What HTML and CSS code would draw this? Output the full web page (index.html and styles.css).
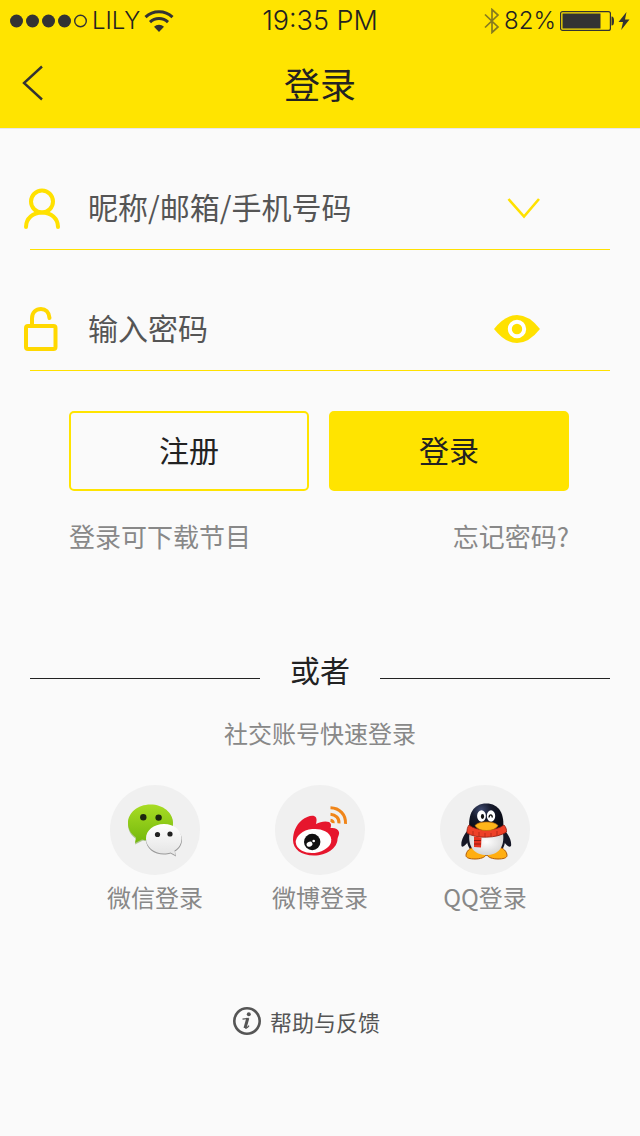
FILE: index.html
```html
<!DOCTYPE html>
<html lang="zh-CN">
<head>
    <meta charset="UTF-8">
    <meta name="viewport" content="width=device-width, initial-scale=1.0">
    <title>登录</title>
    <link rel="stylesheet" href="styles.css">
</head>
<body>
    <header>
        <div class="status-bar">
            <div class="status-left">
                <svg width="78" height="14" viewBox="0 0 78 14" fill="#333">
                    <circle cx="6.5" cy="7" r="6.5"/>
                    <circle cx="22.5" cy="7" r="6.5"/>
                    <circle cx="38.5" cy="7" r="6.5"/>
                    <circle cx="54.5" cy="7" r="6.5"/>
                    <circle cx="70.5" cy="7" r="5.8" fill="none" stroke="#333" stroke-width="1.4"/>
                </svg>
                <span>LILY</span>
                <svg width="30" height="22" viewBox="0 0 30 22" fill="none" stroke="#333" stroke-width="3">
                    <path d="M1.5 7.2a19.5 19.5 0 0 1 27 0"/>
                    <path d="M6 12.2a13 13 0 0 1 18 0"/>
                    <path d="M15 22l-5-5.2a7 7 0 0 1 10 0z" fill="#333" stroke="none"/>
                </svg>
            </div>
            <span class="time">19:35 PM</span>
            <div class="status-right">
                <svg width="16" height="26" viewBox="0 0 16 26" fill="none" stroke="#333" stroke-opacity=".6" stroke-width="1.7">
                    <path d="M1 6.5l13 12.5-6 5.5v-23l6 5.5L1 19.5"/>
                </svg>
                <span>82%</span>
                <svg width="54" height="20" viewBox="0 0 54 20" fill="#333">
                    <rect x=".6" y=".6" width="49.8" height="18.8" rx="2" fill="none" stroke="#333" stroke-width="1.2"/>
                    <rect x="2.5" y="2.5" width="38" height="15"/>
                    <path d="M51.5 5.5c2 0 2.5 1.5 2.5 4.5s-.5 4.5-2.5 4.5z"/>
                </svg>
                <svg width="12" height="20" viewBox="0 0 12 20" fill="#333">
                    <path d="M8.5 1L.5 11H5L3.2 19l8.3-10.5H7z"/>
                </svg>
            </div>
        </div>
        <nav>
            <a href="#" class="back" aria-label="返回">
                <svg width="22" height="36" viewBox="0 0 22 36" fill="none" stroke="#333" stroke-width="2.4">
                    <path d="M20 1.5L2 18l18 16.5"/>
                </svg>
            </a>
            <h1>登录</h1>
        </nav>
    </header>

    <main>
        <form>
            <div class="field">
                <label for="account" aria-label="账号">
                    <svg width="36" height="44" viewBox="0 0 36 44" fill="none" stroke="#ffe100" stroke-width="4" stroke-linecap="round">
                        <circle cx="18" cy="15.5" r="11"/>
                        <path d="M2 41c0-8.500 7-14.500 16-14.500S34 32.500 34 41"/>
                    </svg>
                </label>
                <input type="text" id="account" placeholder="昵称/邮箱/手机号码">
                <button type="button" aria-label="选择账号">
                    <svg width="46" height="30" viewBox="0 0 46 30" fill="none" stroke="#ffe100" stroke-width="2.6">
                        <path d="M14.500 6L30 23.500 45 6"/>
                    </svg>
                </button>
            </div>
            <div class="field">
                <label for="password" aria-label="密码">
                    <svg width="36" height="44" viewBox="0 0 36 44" fill="none" stroke="#ffd800" stroke-width="4" stroke-linecap="round">
                        <rect x="2" y="19" width="29.500" height="23" rx="2"/>
                        <path d="M8 18v-6.500C8 5.500 12 2 17 2c4.500 0 8 3 8.500 9"/>
                    </svg>
                </label>
                <input type="password" id="password" placeholder="输入密码">
                <button type="button" aria-label="显示密码">
                    <svg width="46" height="30" viewBox="0 0 46 30">
                        <path d="M0 15Q11 1 23 1t23 14Q35 29 23 29T0 15z" fill="#ffe100"/>
                        <circle cx="23" cy="15" r="7.200" fill="#ffe100" stroke="#fff" stroke-width="4"/>
                    </svg>
                </button>
            </div>
            <div class="actions">
                <button type="button" class="btn">注册</button>
                <button type="submit" class="btn btn-yellow">登录</button>
            </div>
            <div class="hints">
                <span>登录可下载节目</span>
                <a href="#">忘记密码?</a>
            </div>
        </form>

        <div class="divider"><span>或者</span></div>
        <p class="social-title">社交账号快速登录</p>
        <div class="social">
            <a href="#">
                <svg width="90" height="90" viewBox="0 0 90 90">
                    <defs>
                        <linearGradient id="green" x1="0" y1="0" x2="0" y2="1">
                            <stop offset="0" stop-color="#a8dc24"/>
                            <stop offset="1" stop-color="#74b80c"/>
                        </linearGradient>
                        <linearGradient id="white" x1="0" y1="0" x2="0" y2="1">
                            <stop offset="0" stop-color="#fff"/>
                            <stop offset="1" stop-color="#e4e4e4"/>
                        </linearGradient>
                    </defs>
                    <circle cx="45" cy="45" r="45" fill="#f0f0f0"/>
                    <path d="M40.500 20.500c-13 0-22.500 8.500-22.500 19 0 6 3 11 8 14.500l-1 5.500 8-4c3 .8 5 1.200 8 1.200 12.500 0 22-8 22-18S53 20.500 40.500 20.500z" fill="#6a9b28" opacity=".5"/>
                    <path d="M40.500 19.500C27.500 19.500 18 28 18 38c0 6 3 11 8 14.500L25 58l7-3.500c3 .8 5.500 1.200 8.500 1.200 12.500 0 22.500-8 22.500-18s-10-18.200-22.500-18.200z" fill="url(#green)"/>
                    <circle cx="33.300" cy="32.300" r="3.200" fill="#1d2610"/>
                    <circle cx="48.600" cy="32.600" r="3.200" fill="#1d2610"/>
                    <path d="M54 40.500c-10.500 0-18 6-18 14.500s8 14.500 18 14.500c2.500 0 4.500-.3 6.500-1l5.500 3-1-5c4.500-2.500 7-7 7-11.500 0-8-7.500-14.500-18-14.500z" fill="#999"/>
                    <path d="M54 39c-10.500 0-18 6.500-18 14.500s7.500 15 18 15c2.500 0 4.500-.3 6.500-1l5 2.800-1-4.800c4.500-2.500 7-7 7-12C71.500 45.500 64.500 39 54 39z" fill="url(#white)"/>
                    <circle cx="47.500" cy="49.500" r="2.600" fill="#222"/>
                    <circle cx="60" cy="49" r="2.600" fill="#222"/>
                </svg>
                <span>微信登录</span>
            </a>
            <a href="#">
                <svg width="90" height="90" viewBox="0 0 90 90">
                    <circle cx="45" cy="45" r="45" fill="#f0f0f0"/>
                    <path d="M18 55c0-8 3-15 9-20 5-4 12-6 14-2.500 1 2 .5 4 0 6.500 4-2 9-3.500 13-2 2 1 2.500 3 1.500 6 4-.5 7.500.5 8.500 4 .8 2.500-1.500 5-1.500 7 0 9-11 16.500-23.500 16.500C26 70.500 18 64 18 55z" fill="#e6162d"/>
                    <ellipse cx="38.500" cy="56" rx="17.800" ry="12" transform="rotate(-6 38.500 56)" fill="#fff"/>
                    <circle cx="37.200" cy="57" r="8.200" fill="#111"/>
                    <ellipse cx="34.500" cy="59.200" rx="3" ry="2.400" transform="rotate(-25 34.500 59.200)" fill="#fff"/>
                    <circle cx="38.700" cy="56" r="1.300" fill="#fff"/>
                    <g fill="none" stroke="#f08519" stroke-width="3">
                        <path d="M55.500 22.800c9 .3 15.500 6.500 15 16"/>
                        <path d="M55.500 29.300c5 .3 8.800 3.700 8.500 9"/>
                        <path d="M55.500 35.200c1.800.2 2.800 1.200 2.700 3"/>
                    </g>
                </svg>
                <span>微博登录</span>
            </a>
            <a href="#">
                <svg width="90" height="90" viewBox="0 0 90 90">
                    <defs>
                        <radialGradient id="head" cx=".35" cy=".2" r=".6">
                            <stop offset="0" stop-color="#3f4a70"/>
                            <stop offset=".5" stop-color="#161a2c"/>
                            <stop offset="1" stop-color="#0b0d18"/>
                        </radialGradient>
                        <radialGradient id="belly" cx=".5" cy=".4" r=".6">
                            <stop offset="0" stop-color="#fff"/>
                            <stop offset="1" stop-color="#d5d5d5"/>
                        </radialGradient>
                    </defs>
                    <circle cx="45" cy="45" r="45" fill="#f0f0f0"/>
                    <path d="M29 44c-5 5-8.500 12-7.500 17 1 2 4-1 6.500-4h36c2.500 3 5 6 7 4 1-5-2.500-12-7.500-17z" fill="#151725"/>
                    <path d="M27 48c-2 17 7 22.500 19.500 22.500S67 65 65 48z" fill="#151725"/>
                    <g fill="#ffae12" stroke="#b05a06" stroke-width="1">
                        <path d="M34 62.500c-4 0-8 4-8 8 0 2.500 4 3.500 9 3.500s10.500-1.500 11-4.500z"/>
                        <path d="M59 62.500c4 0 8 4 8 8 0 2.500-4 3.500-9 3.500s-10.500-1.500-11-4.500z"/>
                    </g>
                    <path d="M29.500 48c-2 15 6 22 17 22s18.500-7 16.500-22z" fill="url(#belly)"/>
                    <path d="M29.500 45C27.500 29 33.500 18.500 46.300 18.500S65 29 63 45L46 50z" fill="url(#head)"/>
                    <ellipse cx="41.500" cy="31" rx="4.400" ry="5.800" fill="#fff"/>
                    <ellipse cx="51" cy="31" rx="4.200" ry="5.800" fill="#fff"/>
                    <ellipse cx="42.500" cy="31.500" rx="1.600" ry="2.400" fill="#111"/>
                    <path d="M49 32.500c.5-3.500 3-3.500 3.300 0" fill="none" stroke="#111" stroke-width="1.400"/>
                    <path d="M29 40c8 6.500 26 6.500 35 0 2 2 2.800 5 2.500 7-9 6.500-31 7-39.500 1-.3-3 .5-6 2-8z" fill="#ee4128" stroke="#8f1c10" stroke-width=".8"/>
                    <path d="M33 46v4M39 47v5M45 48v4M51 48v4M57 46v5" stroke="#b82a18" stroke-width="1"/>
                    <path d="M34 51.500l7.500 1-.5 10-7-.5z" fill="#e8321f"/>
                    <path d="M34 55.500h7M34 59h7" stroke="#8f1c10" stroke-width="1"/>
                    <path d="M35 40.500c2-2.500 6.500-3.500 11.500-3.500s9.500 1 11.500 3.500C56 44 52 45.500 46.500 45.500S37 44 35 40.500z" fill="#ffb51a" stroke="#b8690c" stroke-width=".7"/>
                </svg>
                <span>QQ登录</span>
            </a>
        </div>
    </main>

    <footer>
        <a href="#">
            <svg width="28" height="28" viewBox="0 0 28 28">
                <circle cx="14" cy="14" r="12.700" fill="none" stroke="#555" stroke-width="2.600"/>
                <circle cx="15.800" cy="7.300" r="2" fill="#555"/>
                <path d="M9.500 12.200l5.500-.8-2.500 9c-.3 1.500 1.500.8 3.500-1.800" fill="none" stroke="#555" stroke-width="1.200"/>
                <path d="M14.800 11.200l-2.800 10" fill="none" stroke="#555" stroke-width="3"/>
            </svg>
            <span>帮助与反馈</span>
        </a>
    </footer>
</body>
</html>
```
FILE: styles.css
```css
* {
    box-sizing: border-box;
}
body {
    font-family: "Noto Sans CJK SC", sans-serif;
    margin: 0;
    background-color: #fafafa;
    color: #222;
}
a {
    color: inherit;
    text-decoration: none;
}
svg {
    display: block;
    flex: none;
}
input, button {
    font: inherit;
    color: inherit;
    padding: 0;
    border: none;
    background: none;
}
button {
    cursor: pointer;
}

/* Header */
header {
    background-color: #ffe400;
    border-bottom: 1px solid #e6e6f0;
}
.status-bar {
    display: grid;
    grid-template-columns: 1fr auto 1fr;
    align-items: center;
    height: 42px;
    padding: 0 10px;
    font-family: Inter, sans-serif;
    font-weight: 300;
    font-size: 24px;
    line-height: 40px;
}
.status-left, .status-right {
    display: flex;
    align-items: center;
    gap: 4px;
}
.status-right {
    justify-content: flex-end;
}
.time {
    font-size: 27px;
}
nav {
    display: grid;
    grid-template-columns: 60px 1fr 60px;
    align-items: center;
    height: 86px;
    padding-bottom: 4px;
}
.back {
    padding-left: 22px;
}
h1 {
    margin: 0;
    text-align: center;
    font-size: 36px;
    font-weight: 400;
    line-height: 50px;
}

/* Login form */
form {
    padding-top: 38px;
}
.field {
    display: flex;
    align-items: center;
    height: 83px;
    margin: 0 30px 38px;
    padding-right: 70px;
    border-bottom: 1px solid #ffe100;
}
.field label {
    margin-left: -6px;
    margin-right: 28px;
}
.field input {
    flex: 1;
    min-width: 0;
    height: 60px;
    padding-bottom: 5px;
    font-size: 30px;
    outline: none;
}
.field input::placeholder {
    color: #555;
    opacity: 1;
}
.actions {
    display: grid;
    grid-template-columns: 1fr 1fr;
    gap: 20px;
    margin: 40px 71px 0 69px;
}
.btn {
    height: 80px;
    padding-bottom: 4px;
    border: 2px solid #ffe400;
    border-radius: 5px;
    font-size: 30px;
    line-height: 40px;
}
.btn-yellow {
    background-color: #ffe400;
}
.hints {
    display: flex;
    justify-content: space-between;
    margin: 27px 71px 0 69px;
    font-size: 26px;
    line-height: 36px;
    color: #888;
}

/* Social login */
.divider {
    display: flex;
    align-items: flex-end;
    margin: 95px 30px 0;
    font-size: 30px;
    line-height: 40px;
}
.divider::before, .divider::after {
    content: "";
    flex: 1;
    height: 1px;
    margin-bottom: 10px;
    background-color: #222;
}
.divider span {
    width: 120px;
    text-align: center;
}
.social-title {
    margin: 26px 0 34px;
    text-align: center;
    font-size: 24px;
    line-height: 36px;
    color: #888;
}
.social {
    display: flex;
    justify-content: center;
    gap: 65px;
}
.social a {
    display: flex;
    flex-direction: column;
    align-items: center;
    gap: 4px;
    width: 100px;
    font-size: 24px;
    line-height: 36px;
    color: #888;
}

footer {
    display: flex;
    justify-content: center;
    margin-top: 88px;
    padding: 0 27px 92px 0;
}
footer a {
    display: flex;
    align-items: center;
    gap: 9px;
    font-size: 22px;
    line-height: 36px;
    color: #555;
}
```
